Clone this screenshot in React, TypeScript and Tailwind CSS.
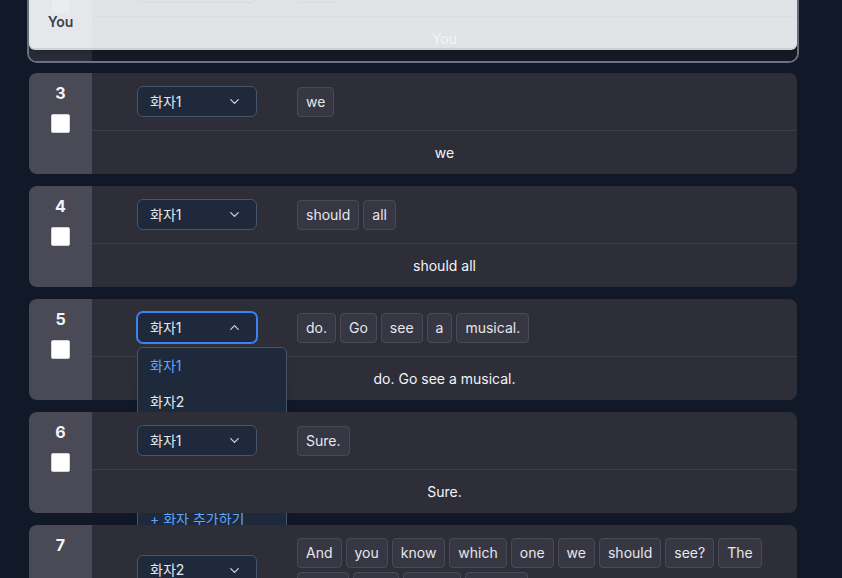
import { ChevronDown, ChevronUp } from "lucide-react";

type Row = { n: number; speaker: string; words: string[]; open?: boolean };

const rows: Row[] = [
    { n: 3, speaker: "화자1", words: ["we"] },
    { n: 4, speaker: "화자1", words: ["should", "all"] },
    { n: 5, speaker: "화자1", words: ["do.", "Go", "see", "a", "musical."], open: true },
    { n: 6, speaker: "화자1", words: ["Sure."] },
    {
        n: 7,
        speaker: "화자2",
        words: ["And", "you", "know", "which", "one", "we", "should", "see?", "The", "Cats,", "Lion", "movie", "Frozen"],
    },
];

const SpeakerSelect = ({ value, open }: { value: string; open?: boolean }) => {
    return (
        <div className="relative w-[120px] h-[31px] shrink-0">
            <div
                className={`h-full w-full flex items-center justify-between pl-3 pr-[14px] rounded-md bg-[#1e293b] text-sm text-[#e5e7eb] border ${open ? "border-[#3b82f6] ring-1 ring-[#3b82f6]" : "border-[#475569]"}`}
            >
                <span>{value}</span>
                {open ? (
                    <ChevronUp size={15} strokeWidth={2} className="text-[#cbd5e1]" />
                ) : (
                    <ChevronDown size={15} strokeWidth={2} className="text-[#cbd5e1]" />
                )}
            </div>
            {open && (
                <div className="absolute left-0 top-[35px] z-10 w-[150px] rounded-md border border-[#475569] bg-[#1e293b] shadow-lg text-sm">
                    <div className="h-9 flex items-center px-3 text-[#60a5fa]">화자1</div>
                    <div className="h-9 flex items-center px-3 text-[#e5e7eb]">화자2</div>
                    <div className="h-9 flex items-center px-3 text-[#e5e7eb]">화자3</div>
                    <div className="h-9 flex items-center px-3 text-[#e5e7eb]">화자4</div>
                    <div className="border-t border-[#475569] pt-4 pb-3 px-3 text-[#60a5fa] leading-5">+ 화자 추가하기</div>
                </div>
            )}
        </div>
    );
};

const SegmentRow = ({ row }: { row: Row }) => {
    return (
        <div className="relative z-0 flex min-h-[101px]">
            <div className="w-[63px] shrink-0 bg-[#4a4a56] rounded-l-lg flex flex-col items-center justify-between pt-2 pb-[41px]">
                <span className="text-base leading-6 font-bold text-[#f3f4f6]">{row.n}</span>
                <div className="w-[19px] h-[19px] bg-white rounded-[2px] border border-gray-300" />
            </div>
            <div className="flex-1 bg-[#2e2e39] rounded-r-lg flex flex-col">
                <div className="flex items-center pl-[45px] pr-4 py-[13px] gap-10">
                    <SpeakerSelect value={row.speaker} open={row.open} />
                    <div className="flex flex-wrap gap-x-1 gap-y-1">
                        {row.words.map((w, i) => (
                            <span
                                key={i}
                                className="h-[30px] px-2 flex items-center rounded border border-[#4a4a56] bg-[#373743] text-sm text-[#e5e7eb]"
                            >
                                {w}
                            </span>
                        ))}
                    </div>
                </div>
                <div className="border-t border-[#3d3d48] h-[44px] flex items-center justify-center text-sm text-[#f3f4f6]">
                    {row.words.join(" ")}
                </div>
            </div>
        </div>
    );
};

const DraggedRow = () => {
    return (
        <div className="relative z-20 flex h-[101px] rounded-lg ring-2 ring-[#6b7280]">
            <div className="w-[63px] shrink-0 bg-[#2a2d37] rounded-l-lg" />
            <div className="flex-1 bg-[#151a26] rounded-r-lg" />
            <div className="absolute left-0 right-0 top-0 bottom-[11px] flex bg-[#e2e3e6] rounded-b-md border-b-2 border-[#cdd0d4] shadow-md">
                <div className="w-[63px] shrink-0 bg-[#e6e7ea] rounded-bl-md flex flex-col items-center justify-end pb-[16px]">
                    <div className="w-[18px] h-[13px] bg-[#ebecee] mb-[-1px]" />
                    <span className="text-sm leading-5 font-semibold text-[#3a3f4c]">You</span>
                </div>
                <div className="flex-1 flex flex-col">
                    <div className="flex-1 flex items-end pl-[45px] pb-[13px] gap-10">
                        <div className="w-[120px] h-[31px] rounded-md border border-[#d8dadd]" />
                        <div className="w-[41px] h-[30px] rounded border border-[#d8dadd]" />
                    </div>
                    <div className="border-t border-[#dcdde0] h-[32px] flex justify-center pt-[12px] text-sm leading-5 text-[#f4f4f6]">
                        You
                    </div>
                </div>
            </div>
        </div>
    );
};

export default function App() {
    return (
        <div className="h-[578px] overflow-hidden bg-[#111827] font-['Inter','Noto_Sans_CJK_KR',sans-serif]">
            <div className="w-[768px] ml-[29px] -mt-[40px] flex flex-col gap-3">
                <DraggedRow />
                {rows.map((r) => (
                    <SegmentRow key={r.n} row={r} />
                ))}
            </div>
        </div>
    );
}
